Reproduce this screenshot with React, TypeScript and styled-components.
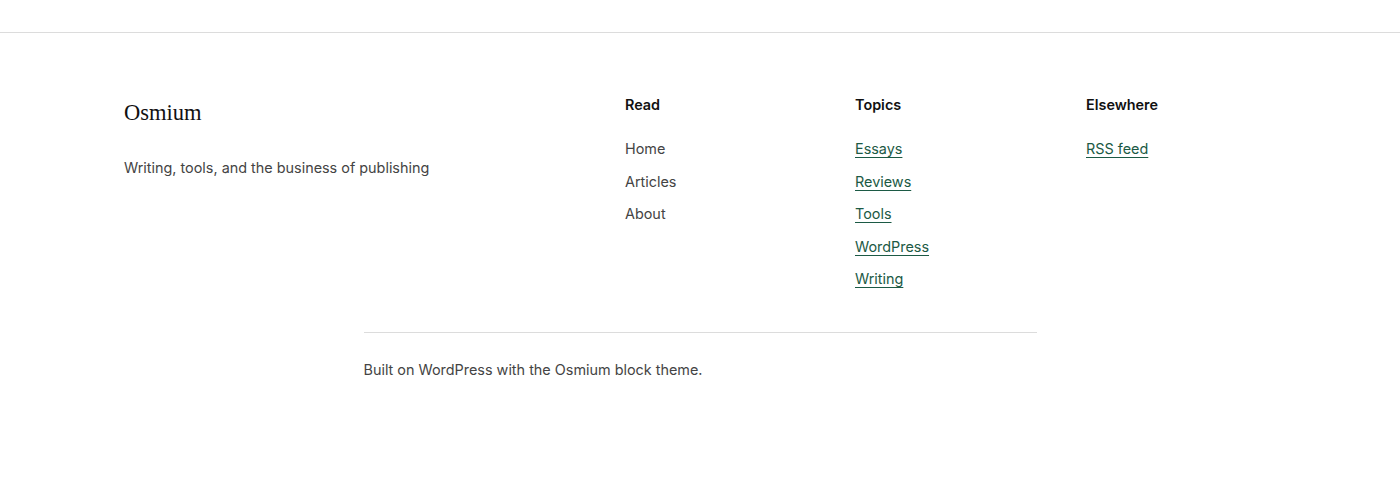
import React from "react";
import styled, { createGlobalStyle } from "styled-components";

const GlobalStyle = createGlobalStyle`
  html, body {
    margin: 0;
    padding: 0;
    background: #fff;
  }
  body {
    font-family: Inter, "Noto Sans", sans-serif;
    color: #3d3d3d;
    -webkit-font-smoothing: antialiased;
  }
`;

const Header = styled.header`
  height: 32px;
  border-bottom: 1px solid #dcdcdc;
`;

const Footer = styled.footer`
  padding: 61px 0 96px;
`;

const Columns = styled.div`
  display: grid;
  grid-template-columns: 501px 230px 231px 190px;
  margin-left: 124px;
`;

const Brand = styled.div`
  padding-top: 4px;
  display: flex;
  flex-direction: column;
  gap: 28px;
`;

const SiteTitle = styled.div`
  font-family: "Liberation Serif", "DejaVu Serif", serif;
  font-size: 22.5px;
  line-height: 30px;
  color: #111;
`;

const Tagline = styled.p`
  margin: 0;
  font-size: 14.4px;
  line-height: 24px;
  color: #444;
`;

const NavColumn = styled.nav`
  display: flex;
  flex-direction: column;
`;

const NavHeading = styled.h2`
  margin: 0 0 21px;
  font-size: 14.4px;
  line-height: 22px;
  font-weight: 600;
  color: #111;
`;

const NavList = styled.ul`
  list-style: none;
  margin: 0;
  padding: 0;
  display: flex;
  flex-direction: column;
  gap: 8.5px;
`;

const NavLink = styled.a<{ $underline?: boolean }>`
  display: inline-block;
  font-size: 14.4px;
  line-height: 24px;
  color: ${(p) => (p.$underline ? "#1c5a45" : "#444")};
  text-decoration: ${(p) => (p.$underline ? "underline" : "none")};
  text-underline-offset: 3px;
  text-decoration-thickness: 1px;
`;

const Bottom = styled.div`
  width: 673px;
  margin: 41px auto 0;
  border-top: 1px solid #dcdcdc;
  padding-top: 25px;
`;

const Credit = styled.p`
  margin: 0;
  font-size: 14.4px;
  line-height: 24px;
  color: #444;
`;

const menus = [
  { title: "Read", links: ["Home", "Articles", "About"], underline: false },
  {
    title: "Topics",
    links: ["Essays", "Reviews", "Tools", "WordPress", "Writing"],
    underline: true,
  },
  { title: "Elsewhere", links: ["RSS feed"], underline: true },
];

const App = () => {
  return (
    <>
      <GlobalStyle />
      <Header />
      <Footer>
        <Columns>
          <Brand>
            <SiteTitle>Osmium</SiteTitle>
            <Tagline>Writing, tools, and the business of publishing</Tagline>
          </Brand>
          {menus.map((m) => (
            <NavColumn key={m.title}>
              <NavHeading>{m.title}</NavHeading>
              <NavList>
                {m.links.map((l) => (
                  <li key={l}>
                    <NavLink href="#" $underline={m.underline}>
                      {l}
                    </NavLink>
                  </li>
                ))}
              </NavList>
            </NavColumn>
          ))}
        </Columns>
        <Bottom>
          <Credit>Built on WordPress with the Osmium block theme.</Credit>
        </Bottom>
      </Footer>
    </>
  );
};

export default App;
